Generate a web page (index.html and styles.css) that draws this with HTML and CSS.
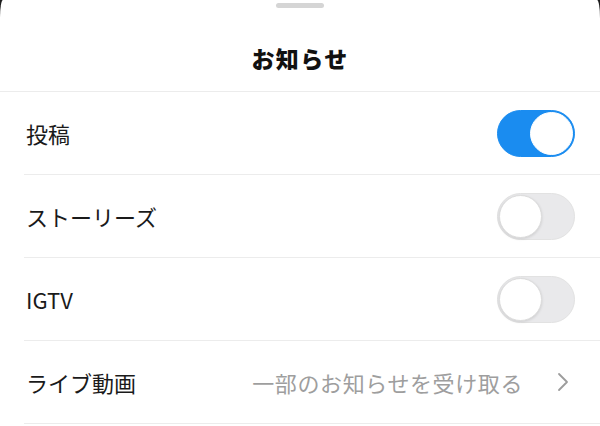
FILE: index.html
```html
<!DOCTYPE html>
<html lang="ja">
<head>
    <meta charset="UTF-8">
    <meta name="viewport" content="width=device-width, initial-scale=1.0">
    <title>お知らせ</title>
    <link rel="stylesheet" href="styles.css">
</head>
<body>

<div class="sheet">
    <div class="handle"></div>
    <div class="header">
        <h1 class="title">お知らせ</h1>
    </div>

    <div class="list">
        <div class="row">
            <span class="label">投稿</span>
            <div class="switch on"><div class="knob"></div></div>
        </div>
        <div class="row">
            <span class="label">ストーリーズ</span>
            <div class="switch"><div class="knob"></div></div>
        </div>
        <div class="row">
            <span class="label">IGTV</span>
            <div class="switch"><div class="knob"></div></div>
        </div>
        <div class="row link">
            <span class="label">ライブ動画</span>
            <span class="value">一部のお知らせを受け取る</span>
            <svg class="chevron" width="12" height="20" viewBox="0 0 12 20">
                <polyline points="2,2 10,10 2,18" fill="none" stroke="#9c9c9c" stroke-width="1.8" stroke-linecap="round" stroke-linejoin="round"/>
            </svg>
        </div>
    </div>
</div>

</body>
</html>
```

FILE: styles.css
```css
* {
    box-sizing: border-box;
}
body {
    margin: 0;
    background-color: #1e1e1e; /* dark page behind the sheet */
    font-family: "Noto Sans CJK JP", "Noto Sans", sans-serif;
    color: #1a1a1a;
    overflow: hidden;
}
.sheet {
    background-color: #ffffff;
    border-radius: 3px 3px 0 0 / 18px 18px 0 0; /* only a thin dark edge shows */
    min-height: 426px;
    padding-top: 3px;
}
.handle {
    width: 48px;
    height: 5px;
    margin: 0 auto;
    border-radius: 3px;
    background-color: #d5d5d5;
}
.header {
    height: 84px;
    padding-top: 17px;
    display: flex;
    justify-content: center;
    align-items: center;
    border-bottom: 1px solid #ececec;
}
.title {
    margin: 0;
    font-size: 23px;
    font-weight: 800;
    letter-spacing: 1.4px;
    color: #111111;
}
.list {
    padding-left: 24px;
}
.row {
    height: 83px;
    display: flex;
    align-items: center;
    padding: 0 25px 0 2px;
    border-bottom: 1px solid #ececec;
}
.label {
    flex: 1;
    font-size: 22px;
}
.switch {
    width: 78px;
    height: 47px;
    border-radius: 24px;
    background-color: #e9e9eb;
    border: 1px solid #e2e2e2;
    padding: 1px;
    display: flex;
}
.switch .knob {
    width: 43px;
    height: 43px;
    border-radius: 50%;
    background-color: #ffffff;
    border: 1px solid #dcdcdc;
    box-shadow: 0 1px 3px rgba(0, 0, 0, 0.12);
}
.switch.on {
    background-color: #1a8cf0; /* blue when active */
    border-color: #1a8cf0;
    justify-content: flex-end;
}
.switch.on .knob {
    border-color: #ffffff;
    box-shadow: none;
}
.row.link {
    padding-right: 31px;
}
.value {
    font-size: 22px;
    color: #9e9e9e;
    letter-spacing: 0.6px;
    margin-right: 34px;
}
.chevron {
    display: block;
}
```
